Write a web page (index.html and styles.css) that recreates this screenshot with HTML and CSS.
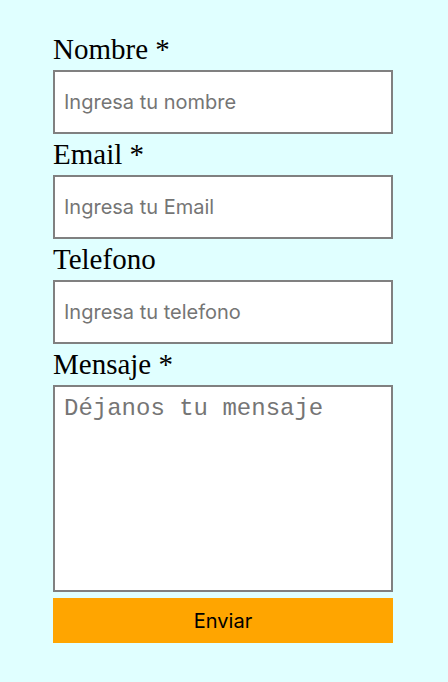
FILE: index.html
```html
<!DOCTYPE html>
<html lang="es">
<head>
<meta charset="utf-8">
<title>Contacto</title>
<link rel="stylesheet" href="styles.css">
</head>
<body>
<form class="contact-form">
  <label class="field-label" for="nombre">Nombre *</label>
  <input class="field-input" id="nombre" type="text" placeholder="Ingresa tu nombre">
  <label class="field-label" for="email">Email *</label>
  <input class="field-input" id="email" type="email" placeholder="Ingresa tu Email">
  <label class="field-label" for="telefono">Telefono</label>
  <input class="field-input" id="telefono" type="tel" placeholder="Ingresa tu telefono">
  <label class="field-label" for="mensaje">Mensaje *</label>
  <textarea class="field-textarea" id="mensaje" placeholder="Déjanos tu mensaje"></textarea>
  <button class="submit-btn" type="button">Enviar</button>
</form>
</body>
</html>
```

FILE: styles.css
```css
html, body {
  margin: 0;
  padding: 0;
  background: #e0ffff;
}

.contact-form {
  width: 340px;
  margin-left: 53px;
  padding-top: 29px;
  display: flex;
  flex-direction: column;
}

.field-label {
  display: block;
  font-family: "Liberation Serif", "Times New Roman", serif;
  font-size: 29px;
  line-height: 41px;
  color: #000;
}

.field-input {
  box-sizing: border-box;
  width: 340px;
  height: 64px;
  margin: 0;
  padding: 0 9px;
  border: 2px solid #808080;
  background: #fff;
  font-family: Inter, "Liberation Sans", sans-serif;
  font-size: 20px;
  color: #000;
  outline: none;
}

.field-input::placeholder {
  color: #757575;
}

.field-textarea {
  box-sizing: border-box;
  width: 340px;
  height: 207px;
  margin: 0;
  padding: 8px 9px;
  border: 2px solid #808080;
  background: #fff;
  font-family: "Liberation Mono", "Courier New", monospace;
  font-size: 24px;
  line-height: 28px;
  resize: none;
  outline: none;
}

.field-textarea::placeholder {
  color: #757575;
}

.submit-btn {
  margin-top: 6px;
  width: 340px;
  height: 45px;
  border: none;
  background: #ffa500;
  color: #000;
  font-family: Inter, "Liberation Sans", sans-serif;
  font-size: 20px;
  padding: 0;
}
```
